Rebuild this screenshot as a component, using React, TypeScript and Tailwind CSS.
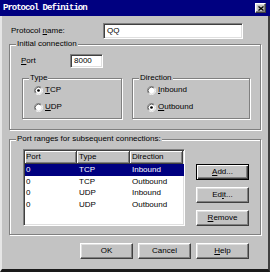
import type { ReactNode } from 'react';

const raised =
  'bg-[#c3c3c3] border border-t-white border-l-white border-r-[#404040] border-b-[#404040] shadow-[inset_-1px_-1px_0_#808080,inset_1px_1px_0_#dfdfdf]';
const sunken =
  'bg-white border border-t-[#808080] border-l-[#808080] border-b-white border-r-white shadow-[inset_1px_1px_0_#404040,inset_-1px_-1px_0_#dfdfdf]';

function Group({ label, className, children }: { label: string; className: string; children?: ReactNode }) {
  return (
    <fieldset
      className={`border border-[#808080] shadow-[1px_1px_0_#fff,inset_1px_1px_0_#fff] ${className}`}
    >
      <legend className="ml-[6px] px-[1px] leading-[10px] bg-[#c3c3c3]">{label}</legend>
      {children}
    </fieldset>
  );
}

function Radio({ checked, children }: { checked?: boolean; children: ReactNode }) {
  return (
    <div className="flex items-center h-[10px] gap-[2px]">
      <svg width="9" height="9" viewBox="0 0 12 12">
        <circle cx="6" cy="6" r="4.5" fill="#fff" />
        <path d="M2.11 9.89 A5.5 5.5 0 0 1 9.89 2.11" fill="none" stroke="#808080" />
        <path d="M9.89 2.11 A5.5 5.5 0 0 1 2.11 9.89" fill="none" stroke="#fff" />
        <path d="M2.82 9.18 A4.5 4.5 0 0 1 9.18 2.82" fill="none" stroke="#404040" />
        <path d="M9.18 2.82 A4.5 4.5 0 0 1 2.82 9.18" fill="none" stroke="#dfdfdf" />
        {checked && <circle cx="6" cy="6" r="1.8" fill="#000" />}
      </svg>
      <span>{children}</span>
    </div>
  );
}

function Button({ children, isDefault }: { children: ReactNode; isDefault?: boolean }) {
  const cls = isDefault
    ? 'bg-[#c3c3c3] border border-black shadow-[inset_1px_1px_0_#fff,inset_-1px_-1px_0_#404040,inset_-2px_-2px_0_#808080]'
    : raised;
  return <div className={`w-[53px] h-[16px] flex items-center justify-center ${cls}`}>{children}</div>;
}

const cols = [
  { label: 'Port', w: 'w-[52px] pl-[1px]' },
  { label: 'Type', w: 'w-[53px] pl-[2px]' },
  { label: 'Direction', w: 'w-[53px] pl-[2px]' },
];

const rows = [
  ['0', 'TCP', 'Inbound'],
  ['0', 'TCP', 'Outbound'],
  ['0', 'UDP', 'Inbound'],
  ['0', 'UDP', 'Outbound'],
];

export default function App() {
  return (
    <div className="w-[270px] h-[272px] bg-[#c3c3c3] overflow-hidden flex flex-col font-['Liberation_Sans',Arial,sans-serif] text-[8px] leading-[10px] text-black">
      {/* title bar */}
      <div className="h-[16px] shrink-0 bg-[#000080] flex items-center justify-between pl-[3px] pr-[4px]">
        <span className="font-['Liberation_Mono',monospace] font-bold text-[9px] tracking-[-1px] text-white">
          Protocol Definition
        </span>
        <div className={`w-[11px] h-[10px] flex items-center justify-center ${raised}`}>
          <svg width="6" height="5" viewBox="0 0 6 5">
            <path d="M0.5 0.5 L5.5 4.5 M5.5 0.5 L0.5 4.5" stroke="#000" strokeWidth="1.3" />
          </svg>
        </div>
      </div>

      <div className="flex-1 flex flex-col border-l-2 border-l-[#e6e6e6] border-r-2 border-r-[#404040] border-b-[3px] border-b-[#1a1a1a]">
        <div className="flex items-center mt-[7px] pl-[9px]">
          <span className="w-[92px]">
            Protocol <u>n</u>ame:
          </span>
          <div className={`w-[140px] h-[16px] flex items-center pl-[3px] ${sunken}`}>QQ</div>
        </div>

        <Group label="Initial connection" className="ml-[7px] w-[252px] h-[91px]">
          <div className="flex items-center mt-[5px] pl-[11px]">
            <span className="w-[49px]">
              <u>P</u>ort
            </span>
            <div className={`w-[33px] h-[14px] flex items-center pl-[3px] ${sunken}`}>8000</div>
          </div>
          <div className="flex mt-[5px] ml-[12px] gap-[10px]">
            <Group label="Type" className="w-[100px] h-[46px]">
              <div className="flex flex-col mt-[2px] pl-[11px] gap-[7px]">
                <Radio checked>
                  <u>T</u>CP
                </Radio>
                <Radio>
                  <u>U</u>DP
                </Radio>
              </div>
            </Group>
            <Group label="Direction" className="w-[118px] h-[46px]">
              <div className="flex flex-col mt-[2px] pl-[14px] gap-[7px]">
                <Radio>
                  <u>I</u>nbound
                </Radio>
                <Radio checked>
                  <u>O</u>utbound
                </Radio>
              </div>
            </Group>
          </div>
        </Group>

        <Group label="Port ranges for subsequent connections:" className="mt-[4px] ml-[7px] w-[252px] h-[101px]">
          <div className="flex mt-[5px] pl-[13px]">
            <div className={`w-[162px] h-[77px] flex flex-col overflow-hidden ${sunken}`}>
              <div className="flex h-[13px] shrink-0 mt-[1px] ml-[1px]">
                {cols.map((c) => (
                  <div
                    key={c.label}
                    className={`${c.w} flex items-center bg-[#c3c3c3] border-r border-b border-r-[#404040] border-b-[#404040] shadow-[inset_1px_1px_0_#fff,inset_-1px_-1px_0_#808080]`}
                  >
                    {c.label}
                  </div>
                ))}
              </div>
              {rows.map((r, i) => (
                <div
                  key={i}
                  className={`flex h-[11.7px] shrink-0 ml-[1px] items-center ${i === 0 ? 'bg-[#000080] text-white' : ''}`}
                >
                  {r.map((cell, j) => (
                    <span key={j} className={cols[j].w}>
                      {cell}
                    </span>
                  ))}
                </div>
              ))}
            </div>
            <div className="flex flex-col ml-[11px] mt-[15px] gap-[7px]">
              <Button isDefault>
                <u>A</u>dd...
              </Button>
              <Button>
                Ed<u>i</u>t...
              </Button>
              <Button>
                <u>R</u>emove
              </Button>
            </div>
          </div>
        </Group>

        <div className="flex mt-[8px] pl-[78px] gap-[5px]">
          <Button>OK</Button>
          <Button>Cancel</Button>
          <Button>
            <u>H</u>elp
          </Button>
        </div>
      </div>
    </div>
  );
}
